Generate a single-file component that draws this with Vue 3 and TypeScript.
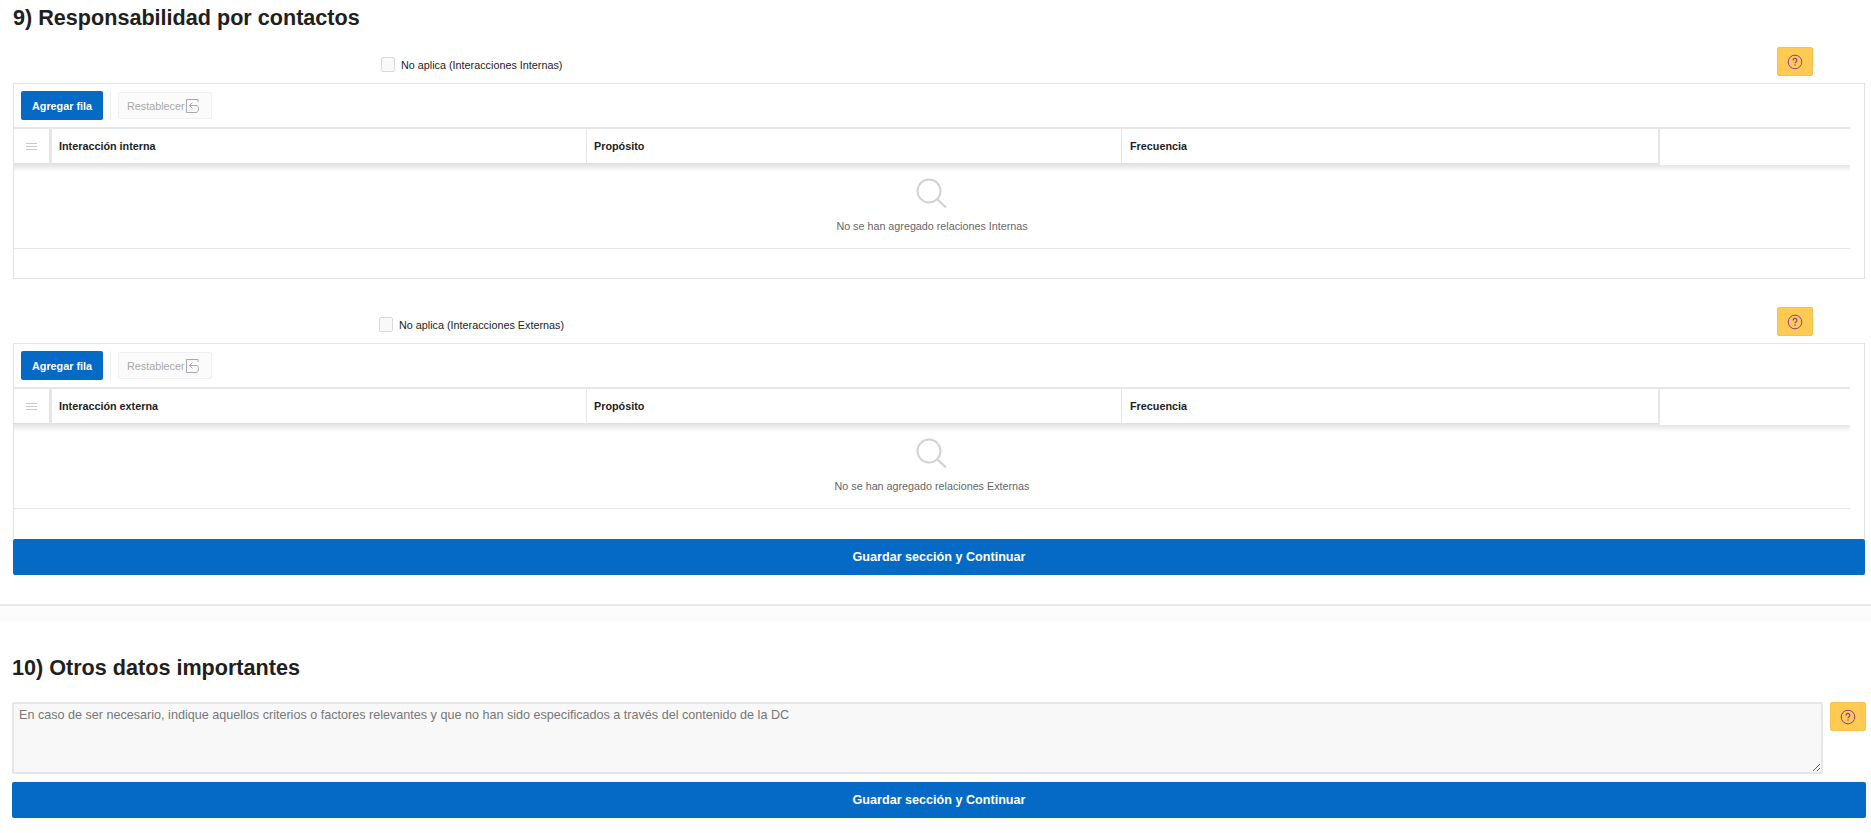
<script setup lang="ts">
interface Block {
  check: string
  checkClass: string
  first: string
  empty: string
}
const blocks: Block[] = [
  { check: 'No aplica (Interacciones Internas)', checkClass: 'check-int', first: 'Interacción interna', empty: 'No se han agregado relaciones Internas' },
  { check: 'No aplica (Interacciones Externas)', checkClass: 'check-ext', first: 'Interacción externa', empty: 'No se han agregado relaciones Externas' },
]
</script>

<template>
  <main class="page">
    <section class="sec-nine">
      <h2 class="title">9) Responsabilidad por contactos</h2>
      <div v-for="b in blocks" :key="b.first" class="block">
        <div class="check-row">
          <label class="check" :class="b.checkClass">
            <span class="box"></span>
            <span>{{ b.check }}</span>
          </label>
          <button class="help" type="button" aria-label="Ayuda">
            <svg width="16" height="16" viewBox="0 0 16 16" fill="none" stroke="#8e3a96">
              <circle cx="8" cy="8" r="6.8" stroke-width="1" />
              <path d="M6.1 6.4a1.9 1.9 0 1 1 2.8 1.6c-.6.4-.9.7-.9 1.3" stroke-width="1.2" />
              <circle cx="8" cy="11" r=".75" fill="#8e3a96" stroke="none" />
            </svg>
          </button>
        </div>
        <div class="region">
          <div class="toolbar">
            <button class="add" type="button">Agregar fila</button>
            <span class="sep"></span>
            <button class="reset" type="button">
              <span>Restablecer</span>
              <svg width="13" height="14" viewBox="0 0 13 14" fill="none" stroke="#a8a8a8" stroke-width="1">
                <path d="M12 3V.5H.5v13H10" />
                <path d="M6.5 3.5 3.5 6.5l3 3M3.5 6.5H10c1.800 0 2.500 1 2.500 3.300s-1 3.700-2.500 3.700" />
              </svg>
            </button>
          </div>
          <div class="table">
            <div class="thead">
              <div class="grip"><span></span><span></span><span></span></div>
              <div class="th th-first">{{ b.first }}</div>
              <div class="th">Propósito</div>
              <div class="th th-third">Frecuencia</div>
              <div class="filler"></div>
            </div>
            <div class="shadow"></div>
            <div class="empty">
              <svg width="32" height="32" viewBox="0 0 32 32" fill="none" stroke="#d2d2d2">
                <circle cx="13" cy="13" r="11.500" stroke-width="2" />
                <path d="M21.500 21.500 30 29.500" stroke-width="2.400" />
              </svg>
              <p>{{ b.empty }}</p>
            </div>
            <div class="foot"></div>
          </div>
        </div>
      </div>
      <button class="save" type="button">Guardar sección y Continuar</button>
    </section>

    <div class="divider"></div>

    <section class="sec-ten">
      <h2 class="title">10) Otros datos importantes</h2>
      <div class="text-row">
        <textarea class="area" placeholder="En caso de ser necesario, indique aquellos criterios o factores relevantes y que no han sido especificados a través del contenido de la DC"></textarea>
        <button class="help" type="button" aria-label="Ayuda">
          <svg width="16" height="16" viewBox="0 0 16 16" fill="none" stroke="#8e3a96">
            <circle cx="8" cy="8" r="6.8" stroke-width="1" />
            <path d="M6.1 6.4a1.9 1.9 0 1 1 2.8 1.6c-.6.4-.9.7-.9 1.3" stroke-width="1.2" />
            <circle cx="8" cy="11" r=".75" fill="#8e3a96" stroke="none" />
          </svg>
        </button>
      </div>
      <button class="save" type="button">Guardar sección y Continuar</button>
    </section>
  </main>
</template>

<style>
html, body { margin: 0; background: #fff; overflow: hidden; }
</style>

<style scoped>
.page {
  width: 1871px;
  height: 833px;
  overflow: hidden;
  font-family: "Liberation Sans", Arial, sans-serif;
  color: #1f1f1f;
}
.sec-nine { padding: 0 6px 0 13px; }
.title {
  margin: 0;
  height: 36px;
  line-height: 36px;
  font-size: 21.6px;
  font-weight: 700;
  color: #202020;
}
.check-row {
  display: flex;
  align-items: flex-end;
  height: 47px;
  box-sizing: border-box;
  padding: 0 52px 7px 0;
}
.check {
  display: flex;
  align-items: center;
  gap: 6px;
  font-size: 10.8px;
  color: #222;
  margin-bottom: 4px;
}
.check-int { margin-left: 368px; }
.check-ext { margin-left: 366px; }
.box {
  width: 14px;
  height: 15px;
  border: 1px solid #d8d8d8;
  border-radius: 2px;
  background: #f9f9f9;
  box-sizing: border-box;
}
.help {
  width: 36px;
  height: 29px;
  padding: 0;
  margin-left: auto;
  border: 1px solid #f5c24f;
  border-radius: 2px;
  background: #ffca52;
  display: flex;
  align-items: center;
  justify-content: center;
}
.region {
  height: 196px;
  box-sizing: border-box;
  border: 1px solid #e2e2e2;
  padding-right: 14px;
  background: #fff;
}
.block + .block { margin-top: 17px; }
.block + .block .region { border-bottom: 0; }
.toolbar {
  height: 43px;
  display: flex;
  align-items: center;
  padding-left: 7px;
}
.add {
  width: 82px;
  height: 29px;
  padding: 0;
  border: 0;
  border-radius: 2px;
  background: #0569c6;
  color: #fff;
  font: 700 10.8px "Liberation Sans", Arial, sans-serif;
}
.sep {
  width: 1px;
  height: 29px;
  margin: 0 7px;
  background: #efefef;
}
.reset {
  width: 94px;
  height: 27px;
  padding: 0 0 0 8px;
  border: 1px solid #f0f0f0;
  border-radius: 2px;
  background: #fbfbfb;
  color: #a8a8a8;
  font: 400 10.8px "Liberation Sans", Arial, sans-serif;
  display: flex;
  align-items: center;
  gap: 1px;
}
.thead {
  display: grid;
  grid-template-columns: 35px 537px 535px 537px 1fr;
  height: 34px;
  border-top: 2px solid #e6e6e6;
  box-sizing: content-box;
}
.grip {
  display: flex;
  flex-direction: column;
  justify-content: center;
  align-items: center;
  gap: 2px;
  padding-bottom: 2px;
}
.grip span {
  width: 11px;
  height: 1px;
  background: #c8c8c8;
}
.th {
  border-left: 1px solid #e6e6e6;
  padding: 0 0 3px 7px;
  display: flex;
  align-items: center;
  font-size: 10.8px;
  font-weight: 700;
  color: #222;
}
.th-first { border-left: 3px solid #e6e6e6; }
.th-third { padding-left: 8px; }
.filler {
  height: 36px;
  position: relative;
  background: #fff;
  border-left: 2px solid #e6e6e6;
}
.shadow {
  height: 9px;
  background: linear-gradient(#dedede, #ffffff);
}
.empty {
  height: 77px;
  box-sizing: border-box;
  border-bottom: 1px solid #e6e6e6;
  text-align: center;
  padding-top: 6px;
}
.empty svg { display: block; margin: 0 auto; }
.empty p {
  margin: 10px 0 0;
  font-size: 10.75px;
  line-height: 13px;
  color: #666;
}
.foot { height: 28px; }
.save {
  display: block;
  width: 100%;
  height: 36px;
  padding: 0;
  border: 0;
  border-radius: 2px;
  background: #0569c6;
  color: #fff;
  font: 700 12.6px "Liberation Sans", Arial, sans-serif;
}
.divider {
  margin-top: 29px;
  height: 16px;
  border-top: 2px solid #e8e8e8;
  background: #fcfcfc;
}
.sec-ten { padding: 28px 5px 0 12px; }
.text-row {
  display: flex;
  gap: 7px;
  margin-top: 16px;
  margin-bottom: 8px;
}
.text-row .help { margin-left: 0; }
.area {
  flex: 1;
  height: 72px;
  box-sizing: border-box;
  padding: 4px 5px;
  border: 2px solid #e6e6e6;
  border-radius: 2px;
  background: #f8f8f8;
  font: 400 12.6px "Liberation Sans", Arial, sans-serif;
  resize: both;
  outline: none;
}
.area::placeholder { color: #777; opacity: 1; }
</style>
